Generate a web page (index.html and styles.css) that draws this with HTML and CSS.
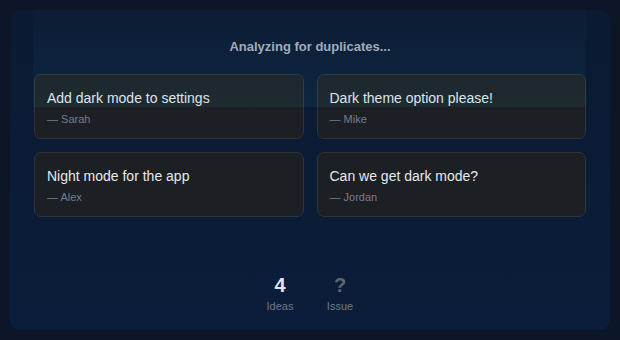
FILE: index.html
```html
<!DOCTYPE html>
<html>
<head>
<meta charset="utf-8">
<link rel="stylesheet" href="styles.css">
</head>
<body>
<div class="panel">
  <div class="scan"></div>
  <div class="heading">Analyzing for duplicates...</div>
  <div class="grid">
    <div class="card"><div class="title">Add dark mode to settings</div><div class="author">— Sarah</div></div>
    <div class="card"><div class="title">Dark theme option please!</div><div class="author">— Mike</div></div>
    <div class="card"><div class="title">Night mode for the app</div><div class="author">— Alex</div></div>
    <div class="card"><div class="title">Can we get dark mode?</div><div class="author">— Jordan</div></div>
  </div>
  <div class="stats">
    <div class="stat"><div class="num">4</div><div class="label">Ideas</div></div>
    <div class="stat"><div class="num muted">?</div><div class="label">Issue</div></div>
  </div>
</div>
</body>
</html>
```

FILE: styles.css
```css
* { box-sizing: border-box; }
html, body { margin: 0; padding: 0; }
body {
  width: 620px;
  height: 340px;
  background: #0d1628;
  font-family: "Liberation Sans", Arial, sans-serif;
  padding: 10px;
}
.panel {
  position: relative;
  height: 320px;
  border-radius: 11px;
  background: linear-gradient(180deg, #0b1a32 0%, #0b1d3a 100%);
  padding: 28px 24px 17px 24px;
  display: flex;
  flex-direction: column;
  overflow: hidden;
}
.scan {
  position: absolute;
  left: 23px;
  right: 24px;
  top: 0;
  height: 97px;
  background: linear-gradient(180deg, rgba(56, 160, 220, 0.015) 0%, rgba(56, 175, 215, 0.08) 100%);
  pointer-events: none;
  z-index: 2;
}
.heading {
  text-align: center;
  font-size: 13px;
  font-weight: bold;
  line-height: 18px;
  color: #a1adbb;
}
.grid {
  margin-top: 18px;
  display: grid;
  grid-template-columns: 1fr 1fr;
  gap: 13px;
}
.card {
  background: #1c1f23;
  border: 1px solid #2e343c;
  border-radius: 7px;
  padding: 13px 12px 11px 12px;
}
.title {
  font-size: 14px;
  line-height: 20px;
  color: #e3e9ef;
}
.author {
  margin-top: 3px;
  font-size: 11px;
  line-height: 16px;
  color: #757b93;
}
.stats {
  margin-top: auto;
  display: flex;
  justify-content: center;
  gap: 20px;
}
.stat {
  width: 40px;
  text-align: center;
}
.num {
  font-size: 20px;
  font-weight: bold;
  line-height: 23px;
  color: #dfe5ec;
}
.num.muted { color: #5d6671; }
.label {
  margin-top: 2px;
  font-size: 11px;
  line-height: 14px;
  color: #707a86;
}
```
